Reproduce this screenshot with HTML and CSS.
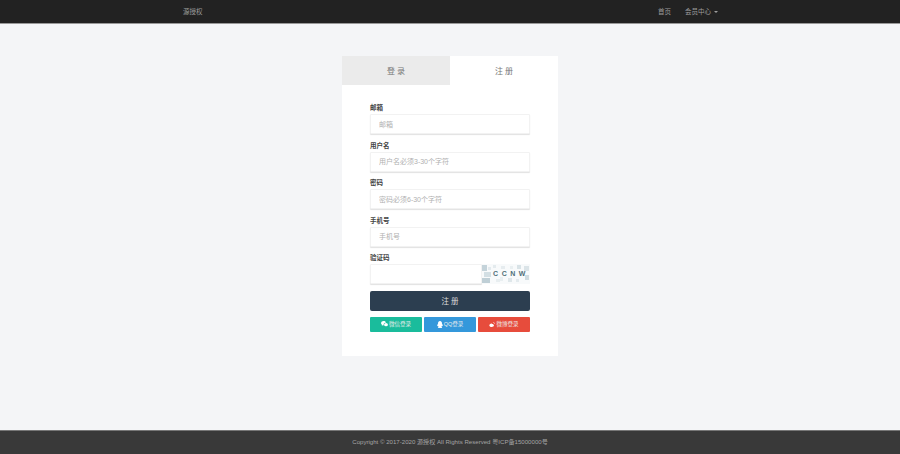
FILE: index.html
```html
<!DOCTYPE html>
<html lang="zh-CN">
<head>
  <meta charset="UTF-8">
  <meta name="viewport" content="width=device-width, initial-scale=1.0">
  <title>源授权 - 注册</title>
  <link rel="stylesheet" href="styles.css">
</head>
<body>
  <div class="navbar">
    <div class="brand">源授权</div>
    <div class="nav-links">
      <div class="nav-item">首页</div>
      <div class="nav-item">会员中心<span class="caret"></span></div>
    </div>
  </div>

  <div class="content">
    <div class="card">
      <div class="tabs">
        <div class="tab">登 录</div>
        <div class="tab active">注 册</div>
      </div>
      <form class="form">
        <div class="field">
          <label class="field-label">邮箱</label>
          <input class="input" type="text" placeholder="邮箱">
        </div>
        <div class="field">
          <label class="field-label">用户名</label>
          <input class="input" type="text" placeholder="用户名必须3-30个字符">
        </div>
        <div class="field">
          <label class="field-label">密码</label>
          <input class="input" type="text" placeholder="密码必须6-30个字符">
        </div>
        <div class="field">
          <label class="field-label">手机号</label>
          <input class="input" type="text" placeholder="手机号">
        </div>
        <div class="field">
          <label class="field-label">验证码</label>
          <div class="captcha-row">
            <input class="input" type="text">
            <div class="captcha">
              <svg class="captcha-noise" width="48" height="20" viewBox="0 0 48 20">
                <rect x="0" y="1" width="5" height="6" fill="#c4d3da"/>
                <rect x="2" y="8" width="7" height="5" fill="#d3dfe4"/>
                <rect x="0" y="14" width="8" height="5" fill="#bfcfd6"/>
                <rect x="6" y="3" width="3" height="3" fill="#e3eaee"/>
                <rect x="11" y="1" width="3" height="3" fill="#e4ebee"/>
                <rect x="14" y="15" width="4" height="3" fill="#e8eef0"/>
                <rect x="19" y="2" width="4" height="3" fill="#e6ecef"/>
                <rect x="18" y="13" width="3" height="4" fill="#e9eff1"/>
                <rect x="26" y="14" width="4" height="4" fill="#dfe7ea"/>
                <rect x="28" y="2" width="3" height="3" fill="#e9eff1"/>
                <rect x="35" y="1" width="4" height="4" fill="#d9e3e7"/>
                <rect x="34" y="15" width="3" height="3" fill="#e4ebee"/>
                <rect x="42" y="2" width="5" height="5" fill="#dbe4e8"/>
                <rect x="43" y="11" width="4" height="5" fill="#d0dce1"/>
              </svg>
              <span class="captcha-text">CCNW</span>
            </div>
          </div>
        </div>
        <button class="submit" type="button">注 册</button>
        <div class="socials">
          <div class="social wechat">
            <svg class="social-icon" width="7" height="6" viewBox="0 0 16 14"><path d="M6 0C2.700 0 0 2.200 0 5c0 1.600.9 3 2.300 3.900L1.700 11l2.400-1.300c.6.2 1.200.3 1.900.3h.3A4 4 0 0 1 6 8.500C6 5.700 8.500 3.700 11.900 3.700 11.100 1.500 8.800 0 6 0z" fill="#fff"/><ellipse cx="11.500" cy="8.500" rx="4.500" ry="3.800" fill="#fff"/></svg>
            微信登录
          </div>
          <div class="social qq">
            <svg class="social-icon" width="6" height="7" viewBox="0 0 14 16"><path d="M7 0C4 0 2.500 2.300 2.500 5c0 1-.4 1.800-1.200 3.200C.4 9.800.2 11.600.8 12c.4.200 1-.4 1.400-1 .3 1 .8 1.800 1.500 2.400C2.700 13.800 2 14.300 2 15c0 .8 1.500 1 2.700 1 1 0 1.800-.3 2.300-.7.500.4 1.300.7 2.300.7 1.200 0 2.700-.2 2.700-1 0-.7-.7-1.200-1.700-1.600.7-.6 1.200-1.400 1.500-2.400.4.600 1 1.200 1.400 1 .6-.4.400-2.200-.5-3.800C11.900 6.800 11.500 6 11.500 5 11.500 2.300 10 0 7 0z" fill="#fff"/></svg>
            QQ登录
          </div>
          <div class="social weibo">
            <svg class="social-icon" width="6" height="5" viewBox="0 0 16 14"><path d="M6.500 4.500C3.200 5.200.5 7.500.5 9.800.5 12.200 3.500 14 7 14c3.800 0 6.500-2.100 6.500-4 0-1.200-1-1.800-1.900-2 .4-1 .3-1.800-.3-2.200-.9-.6-2.400-.2-3.500.3.200-.9.100-1.500-.3-1.700-.2-.1-.5 0-1 .1z" fill="#fff"/><path d="M11 1c2.500-.4 4.500 1.800 3.800 4.400" stroke="#fff" stroke-width="1.500" fill="none"/></svg>
            微博登录
          </div>
        </div>
      </form>
    </div>
  </div>

  <div class="footer">Copyright © 2017-2020 源授权 All Rights Reserved 粤ICP备15000000号</div>
</body>
</html>
```

FILE: styles.css
```css
* {
  box-sizing: border-box;
}

body {
  margin: 0;
  height: 454px;
  display: flex;
  flex-direction: column;
  background: #f4f5f7;
  font-family: "Liberation Sans", "Noto Sans CJK SC", sans-serif;
  overflow: hidden;
}

.navbar {
  height: 24px;
  flex-shrink: 0;
  display: flex;
  justify-content: space-between;
  align-items: center;
  padding: 0 182px 2px 183px;
  background: #222;
  border-bottom: 1px solid #999;
  font-size: 6.500px;
  color: #9d9d9d;
}

.nav-links {
  display: flex;
  gap: 14px;
}

.caret {
  display: inline-block;
  margin-left: 3px;
  vertical-align: middle;
  border-top: 2px solid #9d9d9d;
  border-left: 2px solid transparent;
  border-right: 2px solid transparent;
}

.content {
  flex: 1;
  padding-top: 32px;
  display: flex;
  justify-content: center;
  align-items: flex-start;
}

.card {
  width: 216px;
  height: 300px;
  background: #fff;
}

.tabs {
  display: flex;
  height: 29px;
}

.tab {
  flex: 1;
  display: flex;
  align-items: center;
  justify-content: center;
  font-size: 8px;
  color: #777;
  background: #ebebeb;
}

.tab.active {
  background: #fff;
}

.form {
  padding: 18px 28px 0;
}

.field {
  height: 37.500px;
}

.field-label {
  display: block;
  height: 11px;
  font-size: 6.500px;
  line-height: 9px;
  font-weight: bold;
  color: #444;
}

.input {
  display: block;
  width: 100%;
  height: 20px;
  padding: 0 8px;
  border: 1px solid #f2f2f2;
  border-radius: 1px;
  box-shadow: 0 1px 1px rgba(0, 0, 0, 0.12);
  background: #fff;
  font-family: inherit;
  font-size: 7px;
  outline: none;
}

.input::placeholder {
  color: #b0b0b0;
}

.captcha-row {
  display: flex;
}

.captcha {
  position: relative;
  flex: 0 0 48px;
  height: 20px;
  background: #f8fafb;
}

.captcha-noise {
  display: block;
  filter: blur(0.6px);
}

.captcha-text {
  position: absolute;
  inset: 0;
  padding-left: 10px;
  text-align: center;
  font-size: 7px;
  line-height: 20px;
  font-weight: bold;
  letter-spacing: 3.500px;
  color: #4f6f78;
}

.submit {
  display: block;
  width: 100%;
  height: 20px;
  border: 0;
  border-radius: 2px;
  background: #2c3e50;
  color: #ddd;
  font-family: inherit;
  font-size: 7.500px;
}

.socials {
  display: flex;
  gap: 2px;
  margin-top: 6px;
}

.social {
  width: 52px;
  height: 15px;
  display: flex;
  align-items: center;
  justify-content: center;
  gap: 1px;
  border-radius: 1px;
  color: #eee;
  font-size: 5.500px;
}

.wechat {
  background: #1abc9c;
}

.qq {
  background: #3498db;
}

.weibo {
  background: #e74c3c;
}

.footer {
  height: 24px;
  flex-shrink: 0;
  display: flex;
  align-items: center;
  justify-content: center;
  padding-bottom: 2px;
  border-top: 1px solid #777;
  background: #393939;
  color: #a5a5a5;
  font-size: 6.100px;
}
```
